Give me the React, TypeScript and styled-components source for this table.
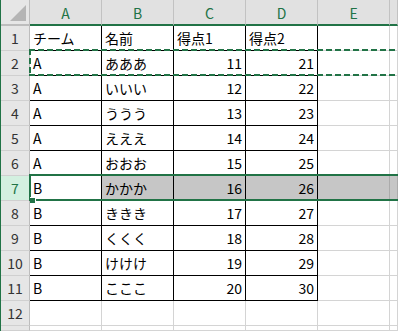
import React from "react";
import styled, { createGlobalStyle } from "styled-components";

const GREEN = "#217346";
const GRID = "#d4d4d4";

type Value = string | number;

const header: Value[] = ["チーム", "名前", "得点1", "得点2"];
const data: Value[][] = [
  ["A", "あああ", 11, 21],
  ["A", "いいい", 12, 22],
  ["A", "ううう", 13, 23],
  ["A", "えええ", 14, 24],
  ["A", "おおお", 15, 25],
  ["B", "かかか", 16, 26],
  ["B", "ききき", 17, 27],
  ["B", "くくく", 18, 28],
  ["B", "けけけ", 19, 29],
  ["B", "こここ", 20, 30],
];

const columns = ["A", "B", "C", "D", "E", ""];
const SELECTED_ROW = 7;
const VISIBLE_ROWS = 12;

const GlobalStyle = createGlobalStyle`
  html, body {
    margin: 0;
    padding: 0;
    overflow: hidden;
    background: #ffffff;
  }
`;

const App = () => {
  const tableRows = [header, ...data];

  return (
    <>
      <GlobalStyle />
      <Sheet>
        <Grid>
          <Corner>
            <CornerMark />
          </Corner>
          {columns.map((col, i) => (
            <ColHead key={"h" + i}>{col}</ColHead>
          ))}

          {/* 12 numbered rows plus the sliver of row 13 at the bottom */}
          {Array.from({ length: VISIBLE_ROWS + 1 }, (_, r) => {
            const rowNo = r + 1;
            const values = tableRows[r];
            const selected = rowNo === SELECTED_ROW;
            return (
              <React.Fragment key={rowNo}>
                <RowHead $selected={selected}>
                  {rowNo <= VISIBLE_ROWS ? rowNo : ""}
                </RowHead>
                {columns.map((_, c) => {
                  const value = values && c < 4 ? values[c] : "";
                  const inTable = !!values && c < 4;
                  return (
                    <Cell
                      key={c}
                      $inTable={inTable}
                      $shaded={selected && c > 0}
                      $numeric={typeof value === "number"}
                    >
                      {value}
                    </Cell>
                  );
                })}
              </React.Fragment>
            );
          })}
        </Grid>

        {/* copy range marching ants on row 2 */}
        <CopyRange>
          <Dash $side="top" />
          <Dash $side="bottom" />
          <DashV />
        </CopyRange>

        {/* selected row 7 */}
        <Selection>
          <FillHandle />
        </Selection>
      </Sheet>
    </>
  );
};

export default App;

const Sheet = styled.div`
  position: relative;
  width: 398px;
  height: 331px;
  overflow: hidden;
  border-left: 1px solid ${GREEN};
  box-sizing: border-box;
  font-family: "Noto Sans CJK JP", "Liberation Sans", sans-serif;
  font-size: 14px;
  color: #000000;
`;

const Grid = styled.div`
  display: grid;
  grid-template-columns: 29px repeat(5, 72px) 1fr;
  grid-template-rows: 26px repeat(12, 25px) 1fr;
  height: 100%;
`;

const Corner = styled.div`
  position: relative;
  background: #e6e6e6;
  border-right: 1px solid #bdbdbd;
  border-bottom: 2px solid #bdbdbd;
  box-sizing: border-box;
`;

const CornerMark = styled.div`
  position: absolute;
  right: 3px;
  bottom: 3px;
  width: 0;
  height: 0;
  border-left: 16px solid transparent;
  border-bottom: 16px solid #b5b5b5;
`;

const ColHead = styled.div`
  display: flex;
  align-items: center;
  justify-content: center;
  background: #e1e1e1;
  color: ${GREEN};
  border-right: 1px solid #c2c2c2;
  border-bottom: 2px solid ${GREEN};
  box-sizing: border-box;
  font-size: 14px;
  line-height: 1;
  padding-top: 1px;
`;

const RowHead = styled.div<{ $selected?: boolean }>`
  display: flex;
  align-items: center;
  justify-content: center;
  background: ${({ $selected }) => ($selected ? "#d3f0e0" : "#e6e6e6")};
  color: ${({ $selected }) => ($selected ? GREEN : "#333333")};
  border-right: 1px solid #bdbdbd;
  border-bottom: 1px solid #d0d0d0;
  box-sizing: border-box;
  line-height: 1;
`;

const Cell = styled.div<{
  $inTable?: boolean;
  $shaded?: boolean;
  $numeric?: boolean;
}>`
  display: flex;
  align-items: center;
  justify-content: ${({ $numeric }) => ($numeric ? "flex-end" : "flex-start")};
  padding: 0 3px 0 3px;
  background: ${({ $shaded }) => ($shaded ? "#c6c6c6" : "#ffffff")};
  border-right: 1px solid
    ${({ $inTable, $shaded }) => ($inTable ? "#000000" : $shaded ? "#ababab" : GRID)};
  border-bottom: 1px solid ${({ $inTable }) => ($inTable ? "#000000" : GRID)};
  box-sizing: border-box;
  white-space: nowrap;
  overflow: hidden;
  line-height: 1;
`;

const CopyRange = styled.div`
  position: absolute;
  left: 28px;
  right: 0;
  top: 49px;
  height: 27px;
  pointer-events: none;
`;

const Dash = styled.div<{ $side: "top" | "bottom" }>`
  position: absolute;
  left: 0;
  right: 0;
  ${({ $side }) => ($side === "top" ? "top: 0;" : "bottom: 0;")}
  height: 2px;
  background: repeating-linear-gradient(
    to right,
    ${GREEN} 0 6px,
    transparent 6px 9px
  );
`;

const DashV = styled.div`
  position: absolute;
  left: 0;
  top: 0;
  bottom: 0;
  width: 2px;
  background: repeating-linear-gradient(
    to bottom,
    ${GREEN} 0 6px,
    transparent 6px 9px
  );
`;

const Selection = styled.div`
  position: absolute;
  left: 28px;
  right: -4px;
  top: 174px;
  height: 27px;
  border: 2px solid ${GREEN};
  box-sizing: border-box;
  pointer-events: none;
`;

const FillHandle = styled.div`
  position: absolute;
  left: -1px;
  bottom: -4px;
  width: 5px;
  height: 5px;
  background: ${GREEN};
  border-top: 1px solid #ffffff;
  border-right: 1px solid #ffffff;
`;
